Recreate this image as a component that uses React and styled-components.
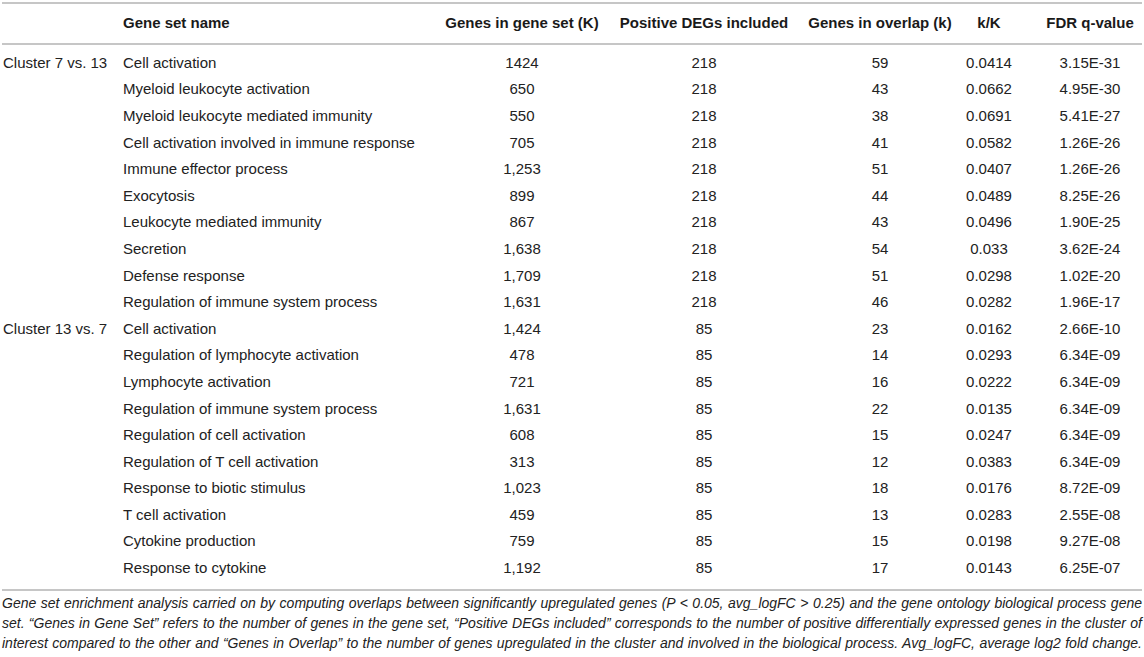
import styled, { createGlobalStyle } from 'styled-components';

const Global = createGlobalStyle`
    body {
        margin: 0;
        background: #fff;
        font-family: "Liberation Sans", Arial, sans-serif;
        color: #222;
    }
`;

const Page = styled.section`
    width: 1144px;
    padding: 2px 2px 0 2px;
    box-sizing: border-box;
`;

const Table = styled.div`
    border-top: 2px solid #c6c6c6;
    border-bottom: 2px solid #c6c6c6;
`;

const cols = '116px 318px 172px 192px 160px 58px 122px';

const HeaderRow = styled.div`
    display: grid;
    grid-template-columns: ${cols};
    height: 37px;
    padding-bottom: 2px;
    align-items: center;
    border-bottom: 2px solid #c6c6c6;
    font-weight: bold;
    font-size: 15px;
    color: #1a1a1a;
`;

const Body = styled.div`
    padding: 4px 0 8px 0;
`;

const Row = styled.div`
    display: grid;
    grid-template-columns: ${cols};
    height: 26.6px;
    align-items: center;
    font-size: 15px;
`;

const Cell = styled.div`
    white-space: nowrap;
    text-align: ${p => p.$left ? 'left' : 'center'};
    padding-left: ${p => p.$pad || 0}px;
`;

const Caption = styled.p`
    margin: 0;
    padding: 2px 0 0 0;
    font-size: 14px;
    font-style: italic;
    line-height: 20px;
    text-align: justify;
    text-align-last: justify;
    color: #222;
`;

const rows = [
    ['Cluster 7 vs. 13', 'Cell activation', '1424', '218', '59', '0.0414', '3.15E-31'],
    ['', 'Myeloid leukocyte activation', '650', '218', '43', '0.0662', '4.95E-30'],
    ['', 'Myeloid leukocyte mediated immunity', '550', '218', '38', '0.0691', '5.41E-27'],
    ['', 'Cell activation involved in immune response', '705', '218', '41', '0.0582', '1.26E-26'],
    ['', 'Immune effector process', '1,253', '218', '51', '0.0407', '1.26E-26'],
    ['', 'Exocytosis', '899', '218', '44', '0.0489', '8.25E-26'],
    ['', 'Leukocyte mediated immunity', '867', '218', '43', '0.0496', '1.90E-25'],
    ['', 'Secretion', '1,638', '218', '54', '0.033', '3.62E-24'],
    ['', 'Defense response', '1,709', '218', '51', '0.0298', '1.02E-20'],
    ['', 'Regulation of immune system process', '1,631', '218', '46', '0.0282', '1.96E-17'],
    ['Cluster 13 vs. 7', 'Cell activation', '1,424', '85', '23', '0.0162', '2.66E-10'],
    ['', 'Regulation of lymphocyte activation', '478', '85', '14', '0.0293', '6.34E-09'],
    ['', 'Lymphocyte activation', '721', '85', '16', '0.0222', '6.34E-09'],
    ['', 'Regulation of immune system process', '1,631', '85', '22', '0.0135', '6.34E-09'],
    ['', 'Regulation of cell activation', '608', '85', '15', '0.0247', '6.34E-09'],
    ['', 'Regulation of T cell activation', '313', '85', '12', '0.0383', '6.34E-09'],
    ['', 'Response to biotic stimulus', '1,023', '85', '18', '0.0176', '8.72E-09'],
    ['', 'T cell activation', '459', '85', '13', '0.0283', '2.55E-08'],
    ['', 'Cytokine production', '759', '85', '15', '0.0198', '9.27E-08'],
    ['', 'Response to cytokine', '1,192', '85', '17', '0.0143', '6.25E-07'],
];

const headers = ['', 'Gene set name', 'Genes in gene set (K)', 'Positive DEGs included', 'Genes in overlap (k)', 'k/K', 'FDR q-value'];

const cellProps = (i) => {
    if (i === 0) return { $left: true, $pad: 1 };
    if (i === 1) return { $left: true, $pad: 5 };
    if (i === 6) return { $pad: 22 };
    return {};
};

const App = () => {
    return (
        <Page>
            <Global />
            <Table>
                <HeaderRow>
                    {headers.map((h, i) => (
                        <Cell key={i} {...cellProps(i)}>{h}</Cell>
                    ))}
                </HeaderRow>
                <Body>
                    {rows.map((r, ri) => (
                        <Row key={ri}>
                            {r.map((v, i) => (
                                <Cell key={i} {...cellProps(i)}>{v}</Cell>
                            ))}
                        </Row>
                    ))}
                </Body>
            </Table>
            <Caption>
                Gene set enrichment analysis carried on by computing overlaps between significantly upregulated genes (P &lt; 0.05, avg_logFC &gt; 0.25) and the gene ontology biological process gene set. “Genes in Gene Set” refers to the number of genes in the gene set, “Positive DEGs included” corresponds to the number of positive differentially expressed genes in the cluster of interest compared to the other and “Genes in Overlap” to the number of genes upregulated in the cluster and involved in the biological process. Avg_logFC, average log2 fold change.
            </Caption>
        </Page>
    );
};

export default App;
